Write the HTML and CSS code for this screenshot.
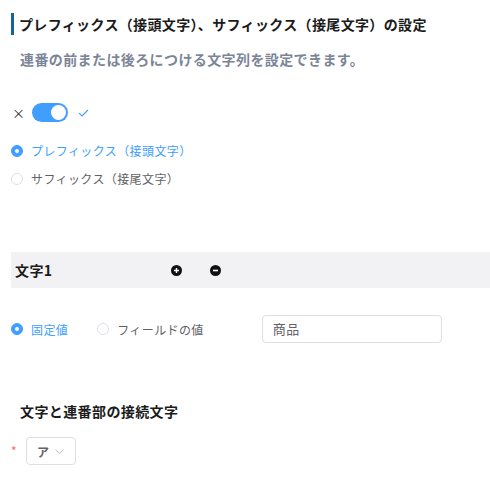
FILE: index.html
```html
<!DOCTYPE html>
<html lang="ja">
<head>
<meta charset="utf-8">
<link rel="stylesheet" href="styles.css">
</head>
<body>
<div class="page">
  <h2 class="header">プレフィックス（接頭文字）、サフィックス（接尾文字）の設定</h2>
  <p class="desc">連番の前または後ろにつける文字列を設定できます。</p>

  <div class="switch-row">
    <span class="x">×</span>
    <span class="switch"><span class="knob"></span></span>
    <svg class="check" width="11" height="8" viewBox="0 0 11 8"><path d="M1 4.2 L4 7 L10 1" fill="none" stroke="#409eff" stroke-width="1.1"/></svg>
  </div>

  <div class="radio-list">
    <label class="radio on"><span class="dot"></span><span>プレフィックス（接頭文字）</span></label>
    <label class="radio"><span class="dot"></span><span>サフィックス（接尾文字）</span></label>
  </div>

  <div class="band">
    <span class="band-title">文字1</span>
    <span class="icon plus"><svg width="11" height="11" viewBox="0 0 11 11"><circle cx="5.5" cy="5.5" r="5.5" fill="#111"/><path d="M3 5.5 H8 M5.5 3 V8" stroke="#fff" stroke-width="1.4"/></svg></span>
    <span class="icon minus"><svg width="11" height="11" viewBox="0 0 11 11"><circle cx="5.5" cy="5.5" r="5.5" fill="#111"/><path d="M3 5.5 H8" stroke="#fff" stroke-width="1.6"/></svg></span>
  </div>

  <div class="value-row">
    <label class="radio on"><span class="dot"></span><span>固定値</span></label>
    <label class="radio field"><span class="dot"></span><span>フィールドの値</span></label>
    <div class="input">商品</div>
  </div>

  <h3 class="sub">文字と連番部の接続文字</h3>

  <div class="select-row">
    <span class="req">*</span>
    <div class="select"><span>ア</span><svg width="9" height="5" viewBox="0 0 9 5"><path d="M0.5 0.5 L4.5 4.5 L8.5 0.5" fill="none" stroke="#b8bcc4" stroke-width="1"/></svg></div>
  </div>
</div>
</body>
</html>
```
FILE: styles.css
```css
* { box-sizing: border-box; }
html, body { margin: 0; padding: 0; background: #fff; }
body {
  font-family: "Noto Sans CJK JP", "Noto Sans", sans-serif;
  color: #303133;
  width: 490px;
  overflow: hidden;
  letter-spacing: 0.4px;
}
.page { padding-top: 13px; }
.header {
  margin: 0 0 0 11px;
  border-left: 3px solid #13659a;
  padding-left: 5px;
  font-size: 14px;
  line-height: 22px;
  height: 22px;
  font-weight: bold;
  color: #1b1b1b;
  letter-spacing: 0.35px;
}
.desc {
  margin: 14px 0 0 20px;
  font-size: 14px;
  line-height: 20px;
  font-weight: bold;
  color: #7c8597;
}
.switch-row {
  display: flex;
  align-items: center;
  margin: 34px 0 0 12px;
  height: 19px;
}
.x { font-size: 13px; color: #303133; line-height: 19px; width: 20px; }
.switch {
  width: 36px; height: 19px; border-radius: 10px;
  background: #409eff; position: relative; display: inline-block;
}
.knob {
  position: absolute; right: 2px; top: 2px;
  width: 15px; height: 15px; border-radius: 50%; background: #fff;
}
.check { margin-left: 10px; }
.radio-list { margin: 20px 0 0 11px; display: flex; flex-direction: column; gap: 11px; }
.radio {
  display: flex; align-items: center;
  font-size: 12px; line-height: 17px; color: #606266;
}
.radio .dot {
  width: 12px; height: 12px; border-radius: 50%;
  border: 1px solid #dcdfe6; background: #fff; margin-right: 8px;
  position: relative; flex: none;
}
.radio.on { color: #409eff; }
.radio.on .dot { background: #409eff; border-color: #409eff; }
.radio.on .dot::after {
  content: ""; position: absolute; left: 3px; top: 3px;
  width: 4px; height: 4px; border-radius: 50%; background: #fff;
}
.band {
  margin: 65px 0 0 11px;
  height: 36px;
  background: #f2f2f4;
  display: flex; align-items: center;
  padding-left: 4px;
}
.band-title { font-size: 14px; font-weight: bold; color: #1b1b1b; width: 156px; }
.icon { display: inline-flex; }
.minus { margin-left: 28px; }
.value-row {
  display: flex; align-items: center;
  margin: 27px 0 0 11px;
}
.value-row .field { margin-left: 29px; }
.input {
  margin-left: 58px;
  width: 180px; height: 28px;
  border: 1px solid #dcdfe6; border-radius: 4px;
  font-size: 13px; line-height: 26px; color: #606266;
  padding-left: 10px;
}
.sub {
  margin: 58px 0 0 20px;
  font-size: 14px; line-height: 20px; font-weight: bold; color: #1b1b1b;
}
.select-row { display: flex; align-items: center; margin: 16px 0 0 11px; }
.req { color: #f56c6c; font-size: 12px; width: 15px; line-height: 12px; }
.select {
  width: 50px; height: 28px;
  border: 1px solid #dcdfe6; border-radius: 4px;
  display: flex; align-items: center; padding-left: 10px; gap: 6px;
  font-size: 12px; color: #606266; font-weight: bold;
}
```
